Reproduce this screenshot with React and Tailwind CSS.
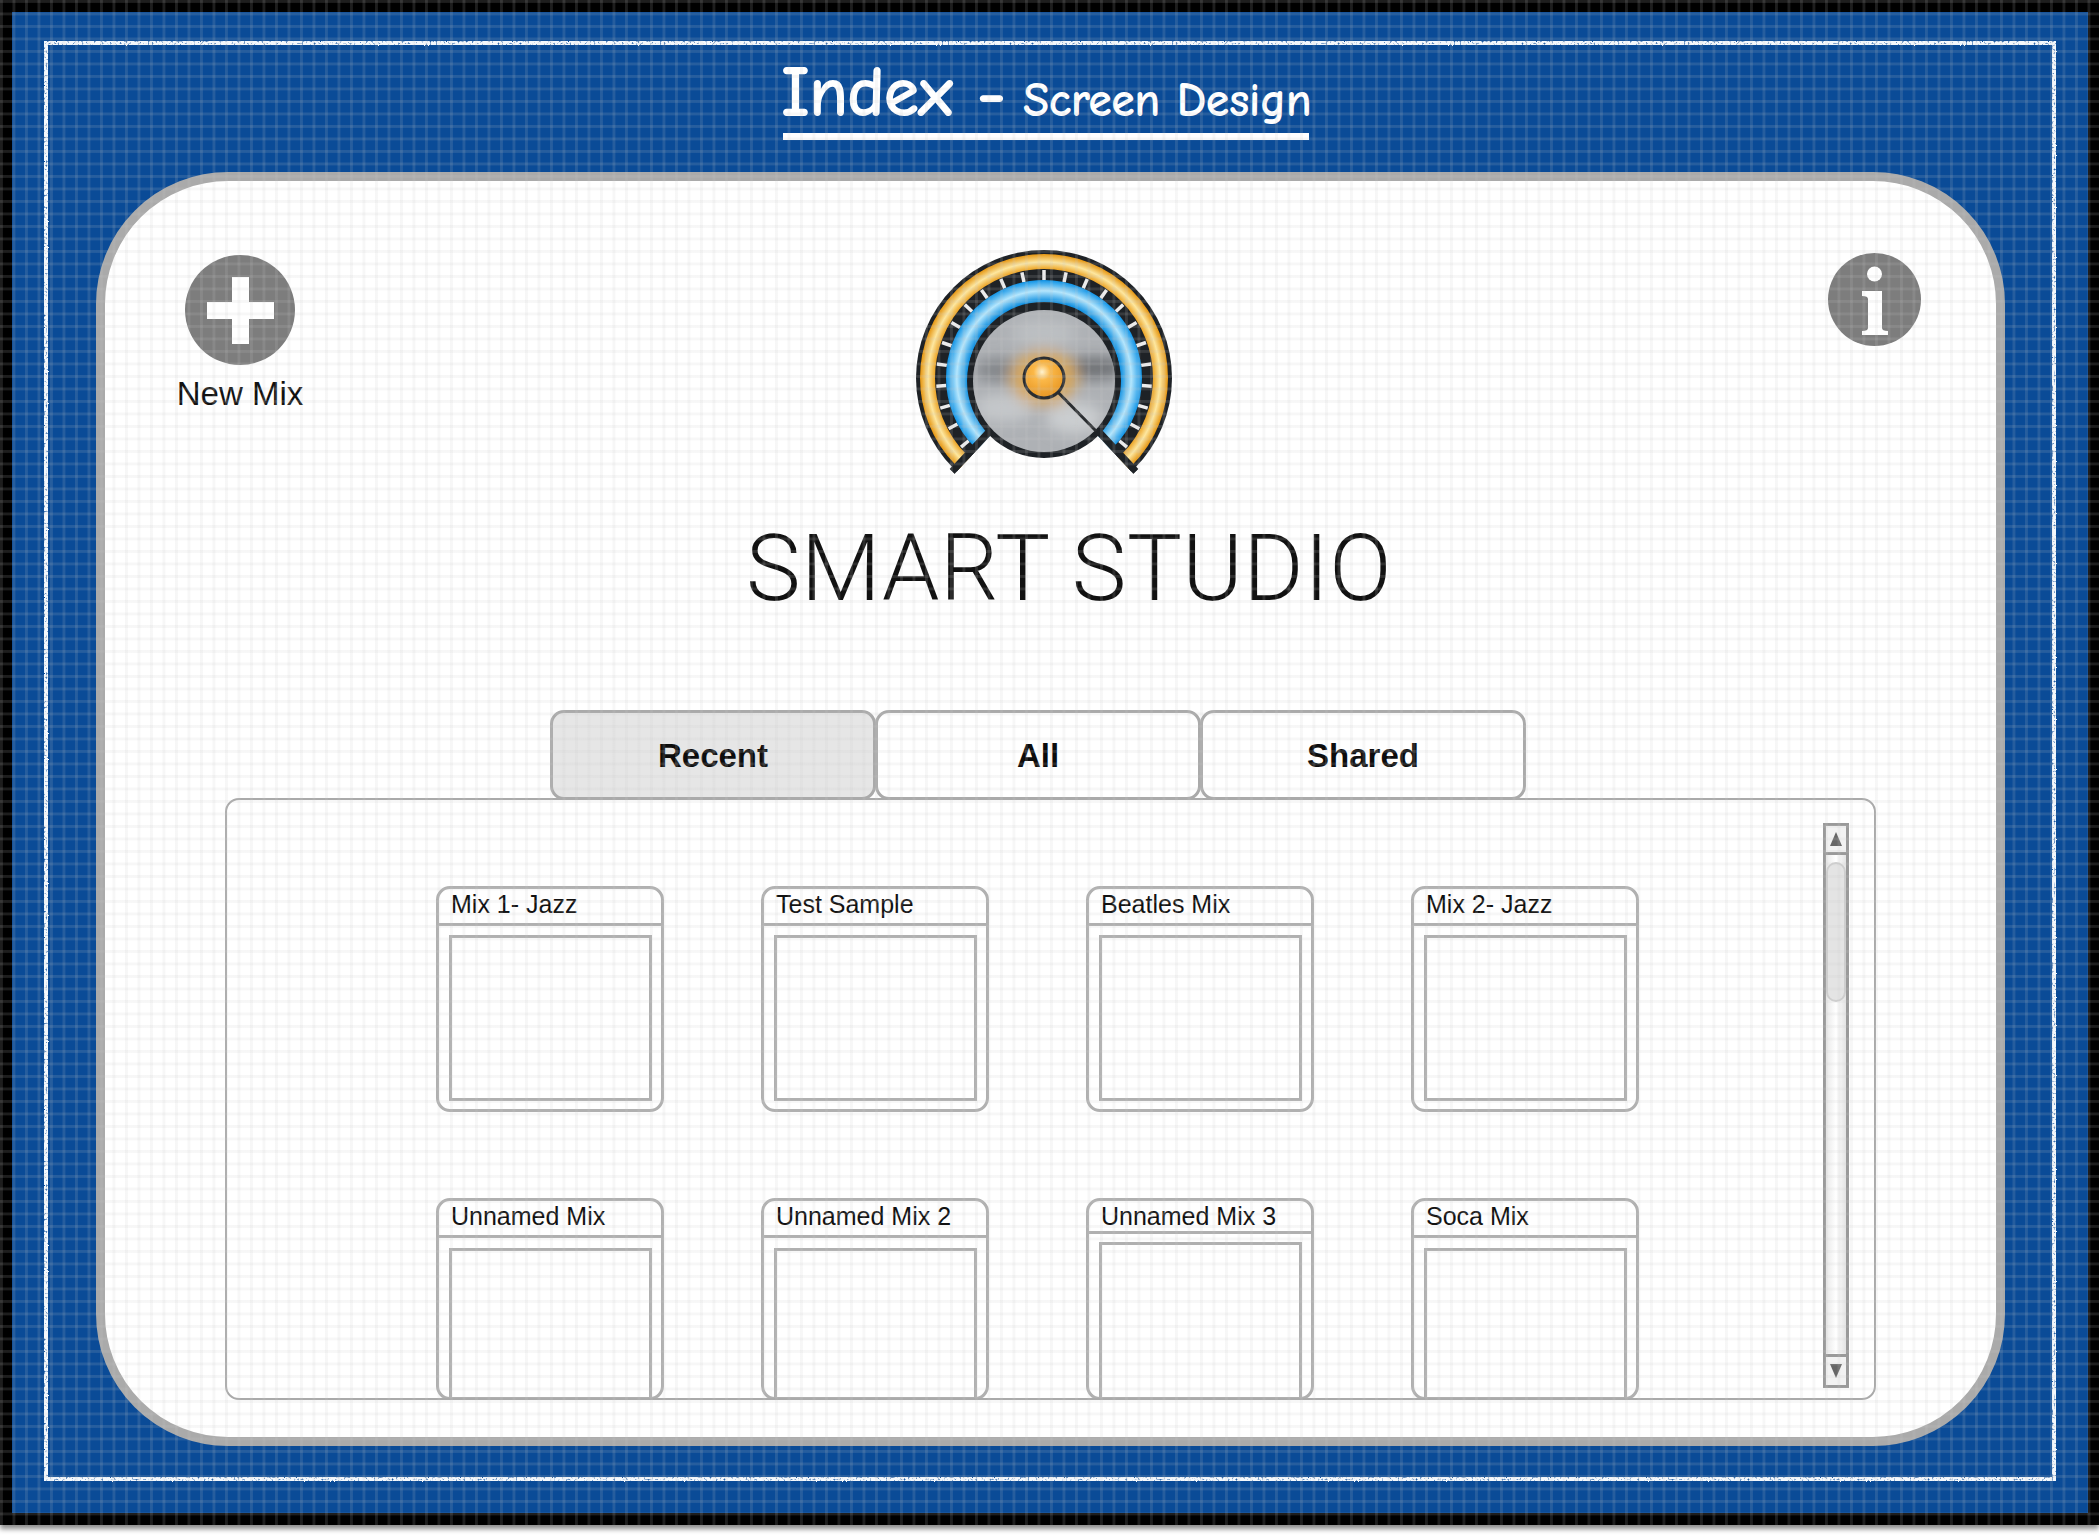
const row1 = ["Mix 1- Jazz", "Test Sample", "Beatles Mix", "Mix 2- Jazz"];
const row2 = ["Unnamed Mix", "Unnamed Mix 2", "Unnamed Mix 3", "Soca Mix"];

function Card({ title, clipped, tight }) {
  return (
    <div className={`w-[228px] shrink-0 border-[3px] border-[#b0b0b0] flex flex-col rounded-[14px] ${clipped ? "h-[202px]" : "h-[226px]"}`}>
      <div className={`pl-[12px] border-b-[3px] border-[#b0b0b0] text-[25px] leading-[30px] text-[#111] ${tight ? "h-[33px]" : "h-[37px]"}`}>{title}</div>
      <div className={`ml-[10px] mr-[9px] flex-1 border-[3px] border-[#b0b0b0] ${clipped ? (tight ? "border-b-0 mt-[8px]" : "border-b-0 mt-[10px]") : "mt-[9px] mb-[8px]"}`} />
    </div>
  );
}

function Gauge() {
  const ticks = [];
  for (let i = -11; i <= 11; i++) {
    const a = (i * 11.8 * Math.PI) / 180;
    ticks.push(
      <line key={i} x1={130 + 98 * Math.sin(a)} y1={130 - 98 * Math.cos(a)} x2={130 + 108 * Math.sin(a)} y2={130 - 108 * Math.cos(a)} stroke="#ececec" strokeWidth="3.5" />
    );
  }
  const sector = "M130 130 L40.5 226 A131 131 0 1 1 219.5 226 Z";
  return (
    <svg width="260" height="240" viewBox="0 0 260 240" className="block">
      <defs>
        <clipPath id="wedge"><path d={sector} /></clipPath>
        <radialGradient id="gold" gradientUnits="userSpaceOnUse" cx="130" cy="130" r="124">
          <stop offset="0.87" stopColor="#e99a14" />
          <stop offset="0.935" stopColor="#fde7a0" />
          <stop offset="1" stopColor="#e59612" />
        </radialGradient>
        <radialGradient id="sky" gradientUnits="userSpaceOnUse" cx="130" cy="130" r="98">
          <stop offset="0.78" stopColor="#0f8fe0" />
          <stop offset="0.89" stopColor="#b4e6fd" />
          <stop offset="1" stopColor="#0f93e6" />
        </radialGradient>
        <radialGradient id="ball" cx="0.45" cy="0.35" r="0.7">
          <stop offset="0" stopColor="#fff3d0" />
          <stop offset="0.3" stopColor="#fbb848" />
          <stop offset="1" stopColor="#e4921f" />
        </radialGradient>
        <filter id="soft" x="-50%" y="-50%" width="200%" height="200%"><feGaussianBlur stdDeviation="7" /></filter>
        <clipPath id="disc"><circle cx="130" cy="133" r="71" /></clipPath>
      </defs>
      <g clipPath="url(#wedge)">
        <circle cx="130" cy="130" r="128" fill="#1e2226" />
        <circle cx="130" cy="130" r="116.5" fill="none" stroke="url(#gold)" strokeWidth="15" />
        {ticks}
        <circle cx="130" cy="130" r="87" fill="none" stroke="url(#sky)" strokeWidth="22" />
        <path d="M40.5 226 L130 130 L219.5 226" fill="none" stroke="#1e2226" strokeWidth="14" />
      </g>
      <circle cx="130" cy="133" r="77" fill="#1e2226" />
      <circle cx="130" cy="133" r="71" fill="#aeb1b5" />
      <g clipPath="url(#disc)">
        <g filter="url(#soft)">
          <ellipse cx="180" cy="120" rx="32" ry="11" fill="#6f7276" />
          <ellipse cx="85" cy="122" rx="24" ry="12" fill="#84878b" />
          <ellipse cx="90" cy="160" rx="30" ry="14" fill="#c4c7ca" />
          <ellipse cx="160" cy="170" rx="28" ry="16" fill="#cbced0" />
          <ellipse cx="130" cy="85" rx="32" ry="14" fill="#bcbfc2" />
          <ellipse cx="130" cy="130" rx="34" ry="28" fill="#d5a862" />
        </g>
      </g>
      <line x1="130" y1="130" x2="182" y2="183" stroke="#2a2d30" strokeWidth="3" />
      <circle cx="130" cy="130" r="20" fill="url(#ball)" stroke="#2a2d30" strokeWidth="3" />
    </svg>
  );
}

export default function App() {
  return (
    <div className="relative w-[2099px] h-[1536px] overflow-hidden bg-white font-['Liberation_Sans',sans-serif]">
      <svg width="0" height="0" className="absolute">
        <defs>
          <filter id="chalk" x="-1%" y="-1%" width="102%" height="102%">
            <feTurbulence type="fractalNoise" baseFrequency="0.5" numOctaves="2" seed="4" result="n" />
            <feDisplacementMap in="SourceGraphic" in2="n" scale="2" result="d" />
            <feColorMatrix in="n" type="matrix" values="0 0 0 0 0  0 0 0 0 0  0 0 0 0 0  0 0 0 -3 2.6" result="m" />
            <feComposite in="d" in2="m" operator="in" />
          </filter>
        </defs>
      </svg>
      <div className="w-[2099px] h-[1525px] pt-[12px] pl-[12px] pr-[11px] pb-[12px] bg-black shadow-[0_4px_5px_rgba(0,0,0,0.45)]">
        <div className="relative w-full h-full bg-[#0a4b97] pt-[29px] px-[32px] pb-[32px]">
          <div className="absolute left-[32px] right-[32px] top-[29px] bottom-[32px] border-[4px] border-[#f4f8fc] [filter:url(#chalk)]" />
          <div className="relative w-full h-full px-[52px] pt-[15px] flex flex-col">
            <div className="h-[116px] shrink-0 flex flex-col items-center pr-[8px]">
              <div className="w-[526px] h-[84px] border-b-[7px] border-white text-white font-bold font-['Comic_Sans_MS','Comic_Neue',cursive] whitespace-nowrap flex items-end justify-center leading-none pb-[4px]">
                <span className="text-[73px] leading-[74px] tracking-[-1.5px]">Index -</span>
                <span className="text-[48px] leading-[56px] ml-[18px] tracking-[-0.5px]">Screen Design</span>
              </div>
            </div>
            <div className="w-[1909px] h-[1274px] shrink-0 bg-white border-[9px] border-[#aaaaaa] rounded-[132px] px-[120px] relative flex flex-col">
              <div className="absolute left-[50px] top-[74px] w-[170px] flex flex-col items-center">
                <div className="w-[110px] h-[110px] rounded-full bg-[#7d7d7d] flex items-center justify-center">
                  <svg width="67" height="67" viewBox="0 0 67 67"><path d="M25 0h17v25h25v17H42v25H25V42H0V25h25z" fill="#fff" /></svg>
                </div>
                <div className="text-[33px] leading-[40px] mt-[9px] text-[#111] whitespace-nowrap">New Mix</div>
              </div>
              <div className="absolute right-[75px] top-[72px] w-[93px] h-[93px] rounded-full bg-[#7d7d7d]">
                <svg width="93" height="93" viewBox="0 0 93 93">
                  <circle cx="46.5" cy="21" r="7.5" fill="#fff" />
                  <path d="M34 38h20v37c0 2 2 3 6 3v4H34v-4c4 0 6-1 6-3V46c0-2-2-3-6-3z" fill="#fff" />
                </svg>
              </div>
              <div className="flex justify-center pt-[67px] pr-[14px] h-[338px] shrink-0">
                <Gauge />
              </div>
              <div className="h-[130px] shrink-0 text-center font-['Roboto',sans-serif] font-light text-[92px] tracking-[0.5px] leading-[100px] text-[#111] pl-[37px]">SMART STUDIO</div>
              <div className="flex h-[90px] shrink-0 mt-[61px] pl-[325px]">
                <div className="w-[326px] pt-[2px] border-[3px] border-[#aaaaaa] rounded-[14px] bg-[#e6e6e6] flex items-center justify-center text-[33px] font-bold text-[#0c0c0c]">Recent</div>
                <div className="w-[326px] pt-[2px] -ml-px border-[3px] border-[#aaaaaa] rounded-[14px] bg-white flex items-center justify-center text-[33px] font-bold text-[#0c0c0c]">All</div>
                <div className="w-[326px] pt-[2px] -ml-px border-[3px] border-[#aaaaaa] rounded-[14px] bg-white flex items-center justify-center text-[33px] font-bold text-[#0c0c0c]">Shared</div>
              </div>
              <div className="w-[1651px] h-[602px] -mt-[2px] shrink-0 border-2 border-[#aaaaaa] rounded-[14px] overflow-hidden relative pt-[86px] pl-[209px] flex flex-col gap-[86px]">
                <div className="flex gap-[97px]">
                  {row1.map((t) => <Card key={t} title={t} />)}
                </div>
                <div className="flex gap-[97px]">
                  {row2.map((t) => <Card key={t} title={t} clipped tight={t === "Unnamed Mix 3"} />)}
                </div>
                <div className="absolute right-[25px] top-[23px] w-[26px] h-[565px] border-[3px] border-[#9a9a9a] flex flex-col bg-[linear-gradient(90deg,#e9e9e9,#ffffff_50%,#e4e4e4)]">
                  <div className="h-[29px] shrink-0 border-b-[3px] border-[#9a9a9a] bg-[#f2f2f2] flex items-center justify-center">
                    <svg width="12" height="14" viewBox="0 0 12 14"><path d="M6 0l6 14H0z" fill="#666" /></svg>
                  </div>
                  <div className="mt-[7px] h-[140px] shrink-0 rounded-full border-2 border-[#cfcfcf] bg-[#e4e4e4]" />
                  <div className="flex-1" />
                  <div className="h-[31px] shrink-0 border-t-[3px] border-[#9a9a9a] bg-[#f2f2f2] flex items-center justify-center">
                    <svg width="12" height="14" viewBox="0 0 12 14"><path d="M0 0h12L6 14z" fill="#666" /></svg>
                  </div>
                </div>
              </div>
            </div>
          </div>
        </div>
      </div>
      <div className="absolute left-0 top-0 w-[2099px] h-[1525px] pointer-events-none bg-[linear-gradient(90deg,rgba(200,200,200,0.15)_0_3px,transparent_3px),linear-gradient(180deg,rgba(200,200,200,0.15)_0_3px,transparent_3px)] bg-size-[12.5px_12.5px]" />
    </div>
  );
}
